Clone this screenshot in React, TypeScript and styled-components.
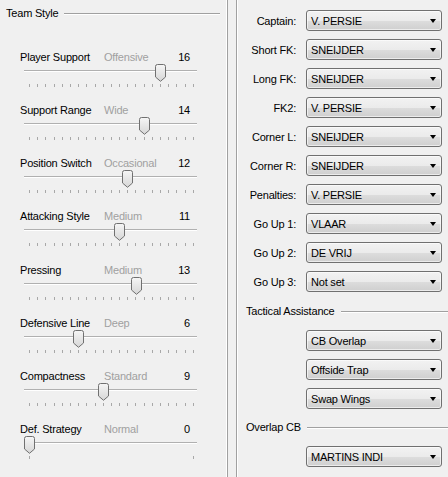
import React from 'react';
import styled, { createGlobalStyle } from 'styled-components';

const GlobalStyle = createGlobalStyle`
  html, body {
    margin: 0;
    padding: 0;
    background: #f0f0f0;
  }
  body {
    font-family: "Liberation Sans", Arial, sans-serif;
    font-size: 11px;
    letter-spacing: -0.2px;
    color: #000;
  }
`;

const sliders = [
  { label: 'Player Support', text: 'Offensive', value: 16, max: 20 },
  { label: 'Support Range', text: 'Wide', value: 14, max: 20 },
  { label: 'Position Switch', text: 'Occasional', value: 12, max: 20 },
  { label: 'Attacking Style', text: 'Medium', value: 11, max: 20 },
  { label: 'Pressing', text: 'Medium', value: 13, max: 20 },
  { label: 'Defensive Line', text: 'Deep', value: 6, max: 20 },
  { label: 'Compactness', text: 'Standard', value: 9, max: 20 },
  { label: 'Def. Strategy', text: 'Normal', value: 0, max: 1 },
];

const setPieces = [
  { label: 'Captain:', value: 'V. PERSIE' },
  { label: 'Short FK:', value: 'SNEIJDER' },
  { label: 'Long FK:', value: 'SNEIJDER' },
  { label: 'FK2:', value: 'V. PERSIE' },
  { label: 'Corner L:', value: 'SNEIJDER' },
  { label: 'Corner R:', value: 'SNEIJDER' },
  { label: 'Penalties:', value: 'V. PERSIE' },
  { label: 'Go Up 1:', value: 'VLAAR' },
  { label: 'Go Up 2:', value: 'DE VRIJ' },
  { label: 'Go Up 3:', value: 'Not set' },
];

const TICK_START = 29;
const TICK_SPAN = 164;
const TRACK_LEFT = 24;

// Layout
const Page = styled.div`
  display: flex;
  width: 448px;
  height: 477px;
  overflow: hidden;
`;

const LeftPanel = styled.div`
  width: 228px;
  flex: none;
  padding: 4px 7px 0 0;
  box-sizing: border-box;
  border-right: 1px solid #a0a0a0;
  box-shadow: inset -1px 0 0 #ffffff;
`;

const Gap = styled.div`
  width: 8px;
  flex: none;
`;

const RightPanel = styled.div`
  flex: 1;
  padding-top: 6px;
  border-left: 1px solid #a0a0a0;
  box-shadow: inset 1px 0 0 #ffffff;
`;

// Group headers
const GroupHeader = styled.div<{ $indent: number; $gapTop?: number }>`
  display: flex;
  align-items: center;
  height: 17px;
  padding-left: ${(p) => p.$indent}px;
  margin-top: ${(p) => p.$gapTop ?? 0}px;
  margin-bottom: 7px;
  white-space: nowrap;
`;

const HeaderLine = styled.div`
  flex: 1;
  height: 1px;
  margin-left: 6px;
  margin-top: 1px;
  background: #a0a0a0;
  box-shadow: 0 1px 0 #ffffff;
`;

// Sliders
const SliderList = styled.div`
  margin-top: 19px;
`;

const SliderRow = styled.div`
  height: 53.15px;
  padding-top: 10px;
  box-sizing: border-box;
`;

const LabelLine = styled.div`
  display: flex;
  align-items: center;
  height: 14px;
  padding-left: 20px;
  width: 190px;
  box-sizing: border-box;
  white-space: nowrap;
`;

const SliderName = styled.span`
  width: 84px;
  flex: none;
`;

const SliderText = styled.span`
  flex: 1;
  color: #a0a0a0;
`;

const SliderValue = styled.span`
  text-align: right;
`;

const SliderArea = styled.div`
  position: relative;
  margin-left: ${TRACK_LEFT}px;
  width: 173px;
  height: 17px;
`;

const Track = styled.div`
  position: absolute;
  left: 0;
  right: 0;
  top: 6px;
  height: 1px;
  background: #b0b0b0;
  border-bottom: 1px solid #ffffff;
`;

const ThumbSvg = styled.svg`
  position: absolute;
  top: 0;
  width: 11px;
  height: 18px;
`;

const Ticks = styled.div`
  display: flex;
  justify-content: space-between;
  margin: 3px 0 0 ${TICK_START}px;
  width: ${TICK_SPAN + 1}px;
  height: 3px;
`;

const Tick = styled.span`
  width: 1px;
  height: 3px;
  background: #a8a8a8;
`;

// Combo boxes
const FieldRow = styled.div`
  display: grid;
  grid-template-columns: 59px 136px;
  column-gap: 10px;
  align-items: center;
  height: 29px;
`;

const FieldLabel = styled.span`
  text-align: right;
  white-space: nowrap;
`;

const Combo = styled.div`
  position: relative;
  display: flex;
  align-items: center;
  height: 21px;
  padding-left: 4px;
  box-sizing: border-box;
  border: 1px solid #707070;
  border-radius: 3px;
  background: linear-gradient(#f2f2f2 0%, #ebebeb 50%, #dddddd 51%, #cfcfcf 100%);
  box-shadow: inset 0 0 0 1px rgba(255, 255, 255, 0.6);
  white-space: nowrap;
`;

const Arrow = styled.span`
  position: absolute;
  right: 5px;
  top: 8px;
  width: 0;
  height: 0;
  border-left: 3.5px solid transparent;
  border-right: 3.5px solid transparent;
  border-top: 4px solid #000;
`;

const Thumb: React.FC<{ left: number }> = ({ left }) => (
  <ThumbSvg viewBox="0 0 11 18" style={{ left }}>
    <defs>
      <linearGradient id="thumbFill" x1="0" y1="0" x2="0" y2="1">
        <stop offset="0" stopColor="#f6f6f6" />
        <stop offset="1" stopColor="#d6d6d6" />
      </linearGradient>
    </defs>
    <path
      d="M0.5 2.5 Q0.5 0.5 2.5 0.5 H8.5 Q10.5 0.5 10.5 2.5 V13 L5.5 17.3 L0.5 13 Z"
      fill="url(#thumbFill)"
      stroke="#707070"
      strokeWidth="1"
    />
  </ThumbSvg>
);

const Slider: React.FC<{ label: string; text: string; value: number; max: number }> = ({
  label,
  text,
  value,
  max,
}) => {
  const center = TICK_START - TRACK_LEFT + (value / max) * TICK_SPAN;
  return (
    <SliderRow>
      <LabelLine>
        <SliderName>{label}</SliderName>
        <SliderText>{text}</SliderText>
        <SliderValue>{value}</SliderValue>
      </LabelLine>
      <SliderArea>
        <Track />
        <Thumb left={center - 5} />
      </SliderArea>
      <Ticks>
        {Array.from({ length: max + 1 }, (_, i) => (
          <Tick key={i} />
        ))}
      </Ticks>
    </SliderRow>
  );
};

const ComboBox: React.FC<{ value: string }> = ({ value }) => (
  <Combo>
    {value}
    <Arrow />
  </Combo>
);

export default function App() {
  return (
    <>
      <GlobalStyle />
      <Page>
        <LeftPanel>
          <GroupHeader $indent={6}>
            Team Style
            <HeaderLine />
          </GroupHeader>
          <SliderList>
            {sliders.map((s) => (
              <Slider key={s.label} {...s} />
            ))}
          </SliderList>
        </LeftPanel>
        <Gap />
        <RightPanel>
          {setPieces.map((f) => (
            <FieldRow key={f.label}>
              <FieldLabel>{f.label}</FieldLabel>
              <ComboBox value={f.value} />
            </FieldRow>
          ))}
          <GroupHeader $indent={9} $gapTop={6}>
            Tactical Assistance
            <HeaderLine />
          </GroupHeader>
          {['CB Overlap', 'Offside Trap', 'Swap Wings'].map((v) => (
            <FieldRow key={v}>
              <span />
              <ComboBox value={v} />
            </FieldRow>
          ))}
          <GroupHeader $indent={9} $gapTop={5}>
            Overlap CB
            <HeaderLine />
          </GroupHeader>
          <FieldRow>
            <span />
            <ComboBox value="MARTINS INDI" />
          </FieldRow>
        </RightPanel>
      </Page>
    </>
  );
}
